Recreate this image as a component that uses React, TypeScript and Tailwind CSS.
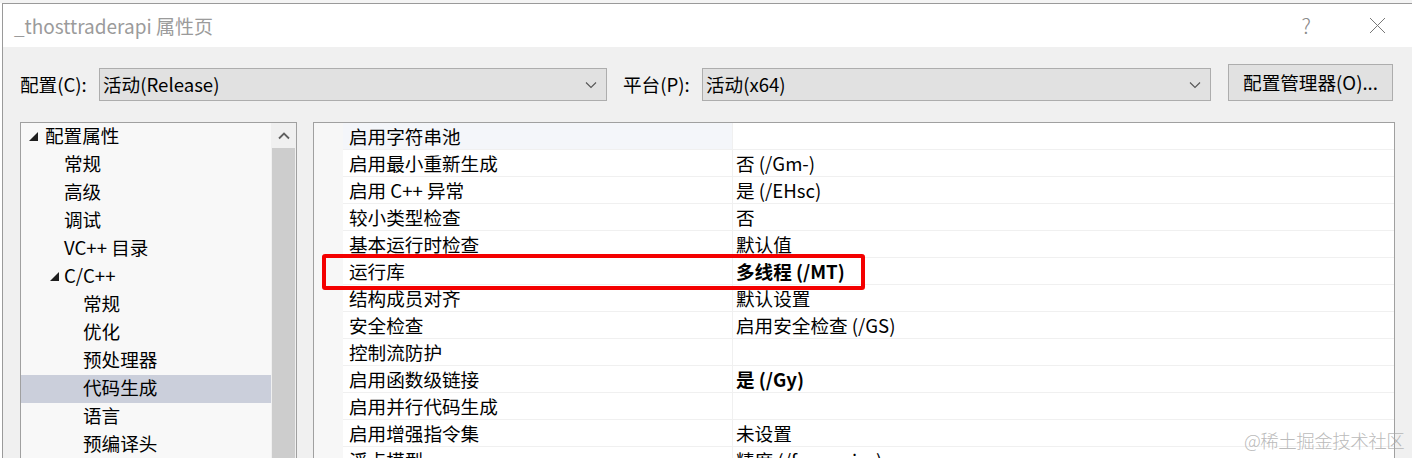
import { type ReactNode } from 'react';

const font = "font-['Segoe_UI','Noto_Sans_CJK_SC',sans-serif]";

interface TreeItem {
  label: string;
  depth: 0 | 1 | 2;
  expanded?: boolean;
  selected?: boolean;
}

const tree: TreeItem[] = [
  { label: '配置属性', depth: 0, expanded: true },
  { label: '常规', depth: 1 },
  { label: '高级', depth: 1 },
  { label: '调试', depth: 1 },
  { label: 'VC++ 目录', depth: 1 },
  { label: 'C/C++', depth: 1, expanded: true },
  { label: '常规', depth: 2 },
  { label: '优化', depth: 2 },
  { label: '预处理器', depth: 2 },
  { label: '代码生成', depth: 2, selected: true },
  { label: '语言', depth: 2 },
  { label: '预编译头', depth: 2 },
];

interface Prop {
  name: string;
  value: string;
  bold?: boolean;
}

const props: Prop[] = [
  { name: '启用字符串池', value: '' },
  { name: '启用最小重新生成', value: '否 (/Gm-)' },
  { name: '启用 C++ 异常', value: '是 (/EHsc)' },
  { name: '较小类型检查', value: '否' },
  { name: '基本运行时检查', value: '默认值' },
  { name: '运行库', value: '多线程 (/MT)', bold: true },
  { name: '结构成员对齐', value: '默认设置' },
  { name: '安全检查', value: '启用安全检查 (/GS)' },
  { name: '控制流防护', value: '' },
  { name: '启用函数级链接', value: '是 (/Gy)', bold: true },
  { name: '启用并行代码生成', value: '' },
  { name: '启用增强指令集', value: '未设置' },
  { name: '浮点模型', value: '精度 (/fp:precise)' },
];

function Chevron() {
  return (
    <svg width="12" height="8" viewBox="0 0 12 8" className="shrink-0">
      <polyline points="1,1.5 6,6.5 11,1.5" fill="none" stroke="#555" strokeWidth="1.1" />
    </svg>
  );
}

function Select({ value, width }: { value: string; width: string }) {
  return (
    <div
      className={`${width} mt-[4px] flex h-[33px] items-center justify-between border border-[#adadad] bg-[#e1e1e1] pl-[3px] pr-[9px]`}
    >
      <span>{value}</span>
      <Chevron />
    </div>
  );
}

function Triangle() {
  return (
    <svg width="9" height="9" viewBox="0 0 9 9" className="shrink-0">
      <polygon points="9,0 9,9 0,9" fill="#1e1e1e" />
    </svg>
  );
}

// text x offsets inside the panel: root 24, level one 43, level two 62
function TreeRow({ item }: { item: TreeItem }) {
  let pad = 'pl-[62px]';
  if (item.depth === 0) pad = 'pl-[8px]';
  else if (item.depth === 1) pad = item.expanded ? 'pl-[29px]' : 'pl-[43px]';
  return (
    <div
      className={`flex h-[28px] items-center ${pad} ${item.selected ? 'bg-[#cbcfdb]' : ''}`}
    >
      {item.expanded ? (
        <span className={`flex pb-[1px] ${item.depth === 0 ? 'mr-[7px]' : 'mr-[5px]'}`}>
          <Triangle />
        </span>
      ) : null}
      <span className="-mt-[3px]">{item.label}</span>
    </div>
  );
}

function Panel({ className, children }: { className: string; children: ReactNode }) {
  return <div className={`border border-[#a0a0a0] ${className}`}>{children}</div>;
}

export default function App() {
  return (
    <div className={`relative h-[458px] w-[1412px] overflow-hidden bg-white text-[18.6px] leading-none text-black ${font}`}>
      <div className="h-[3px] bg-[#f4f4f4]" />
      <div className="ml-[2px] h-full border-l border-t border-[#9a9a9a] bg-[#f0f0f0]">
        {/* title bar */}
        <div className="flex h-[43px] items-center bg-white pl-[11px] pr-[26px]">
          <span className="text-[19px] text-[#9b9b9b]">_thosttraderapi 属性页</span>
          <span className="ml-auto mr-[58px] text-[21px] font-light text-[#8a8a8a]">?</span>
          <svg width="17" height="17" viewBox="0 0 17 17">
            <line x1="1" y1="1" x2="16" y2="16" stroke="#777" strokeWidth="1" />
            <line x1="16" y1="1" x2="1" y2="16" stroke="#777" strokeWidth="1" />
          </svg>
        </div>

        <div className="pl-[17px]">
          {/* configuration row */}
          <div className="mt-[17px] flex h-[37px] items-start">
            <span className="mt-[4px] flex h-[33px] w-[79px] items-center">配置(C):</span>
            <Select value="活动(Release)" width="w-[508px]" />
            <span className="ml-[16px] mt-[4px] flex h-[33px] w-[79px] items-center">平台(P):</span>
            <Select value="活动(x64)" width="w-[509px]" />
            <div className="ml-[17px] flex h-[37px] w-[165px] items-center justify-center border border-[#adadad] bg-[#e1e1e1]">
              配置管理器(O)...
            </div>
          </div>

          {/* panels */}
          <div className="mt-[21px] flex items-start gap-[16px]">
            <Panel className="flex h-[340px] w-[277px] bg-[#f8f8f8]">
              <div className="flex-1">
                {tree.map((item, i) => (
                  <TreeRow key={i} item={item} />
                ))}
              </div>
              <div className="flex w-[25px] flex-col bg-[#f0f0f0]">
                <div className="flex h-[25px] items-center justify-center">
                  <svg width="12" height="8" viewBox="0 0 12 8">
                    <polyline points="1,6.5 6,1.5 11,6.5" fill="none" stroke="#606060" strokeWidth="1.8" />
                  </svg>
                </div>
                <div className="mx-[1px] flex-1 bg-[#cdcdcd]" />
              </div>
            </Panel>

            <Panel className="h-[340px] w-[1082px] bg-white">
              <div className="flex">
                <div className="w-[29px] self-stretch bg-[#f7f7f7]" />
                <div className="flex-1">
                  {props.map((p, i) => (
                    <div key={i} className="flex h-[27px] border-b border-[#f0f0f0]">
                      <div
                        className={`flex w-[390px] items-center border-r border-[#f0f0f0] pl-[6px] ${i === 0 ? 'bg-[#f4f6fa]' : ''}`}
                      >
                        {p.name}
                      </div>
                      <div className={`flex flex-1 items-center pl-[3px] ${p.bold ? 'font-bold' : ''}`}>
                        {p.value}
                      </div>
                    </div>
                  ))}
                </div>
              </div>
            </Panel>
          </div>
        </div>
      </div>

      {/* highlight box */}
      <div className="absolute left-[322px] top-[254px] h-[36px] w-[543px] rounded-[3px] border-[4px] border-[#f40000]" />

      {/* watermark */}
      <div className="absolute left-[1244px] top-[431px] text-[18.5px] font-light tracking-[-0.5px] text-[#a8a8a8]/80">
        @稀土掘金技术社区
      </div>
    </div>
  );
}
